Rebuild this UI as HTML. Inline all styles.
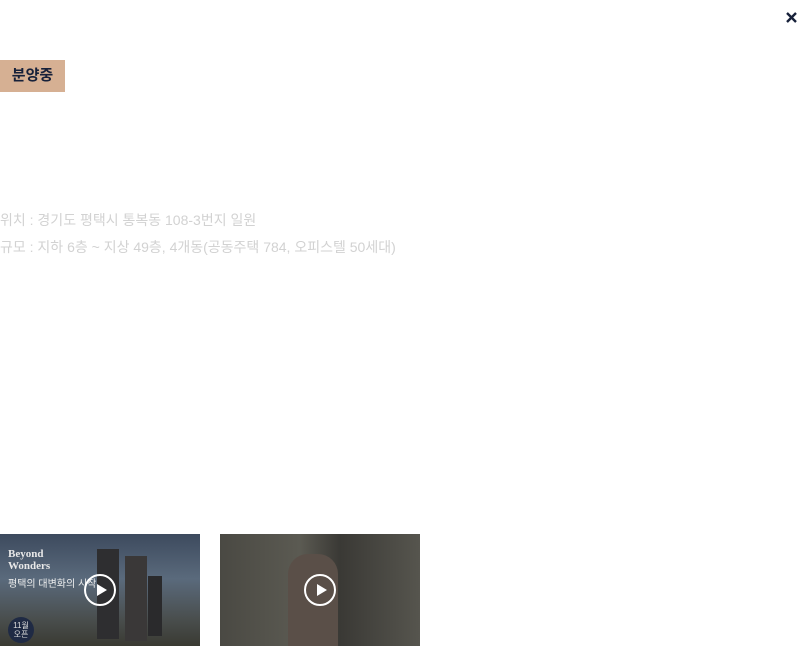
<!DOCTYPE html>
<html><head><meta charset="utf-8"><style>
body{margin:0;width:810px;height:647px;background:#fff;position:relative;overflow:hidden;font-family:"Liberation Sans","Noto Sans CJK KR",sans-serif}
.x{position:absolute;left:785px;top:11px}
.badge{position:absolute;left:0;top:60px;width:65px;height:32px;background:#d6b093;color:#17213a;font-weight:bold;font-size:15px;line-height:32px;text-align:center}
.t{position:absolute;left:0;font-size:14px;color:#d2d2d2;white-space:nowrap;letter-spacing:0}
.v{position:absolute;top:534px;width:200px;height:112px;overflow:hidden}
.play{position:absolute;left:84px;top:40px;width:28px;height:28px;border:2px solid #fff;border-radius:50%}
.play:after{content:"";position:absolute;left:11px;top:8px;border-left:10px solid #fff;border-top:6px solid transparent;border-bottom:6px solid transparent}
</style></head><body>
<svg class="x" width="13" height="13" viewBox="0 0 13 13"><path d="M2 2L11 11M11 2L2 11" stroke="#17213a" stroke-width="2.4"/></svg>
<div class="badge">분양중</div>
<div class="t" style="top:210px">위치 : 경기도 평택시 통복동 108-3번지 일원</div>
<div class="t" style="top:237px">규모 : 지하 6층 ~ 지상 49층, 4개동(공동주택 784, 오피스텔 50세대)</div>
<div class="v" style="left:0;background:linear-gradient(#3d4a5e 0%,#5a6a7c 40%,#4a4f4f 75%,#3a3a32 100%)">
 <div style="position:absolute;left:97px;top:15px;width:22px;height:90px;background:#2e2e30"></div>
 <div style="position:absolute;left:125px;top:22px;width:22px;height:85px;background:#3a3838"></div>
 <div style="position:absolute;left:148px;top:42px;width:14px;height:60px;background:#2a2a2c"></div>
 <div style="position:absolute;left:8px;top:14px;color:#e8e8e8;font-family:'Liberation Serif',serif;font-weight:bold;font-size:11px;line-height:12px">Beyond<br>Wonders</div>
 <div style="position:absolute;left:8px;top:41px;color:#eee;font-size:10px">평택의 대변화의 시작</div>
 <div style="position:absolute;left:8px;top:83px;width:26px;height:26px;border-radius:50%;background:#1f2a44;color:#ddd;font-size:8px;text-align:center;line-height:9px;padding-top:4px;box-sizing:border-box">11월<br>오픈</div>
 <div class="play"></div></div>
<div class="v" style="left:220px;background:linear-gradient(90deg,#4a4943 0%,#5b5a52 40%,#3a3935 60%,#56554e 100%)">
 <div style="position:absolute;left:68px;top:20px;width:50px;height:92px;background:#5a4f48;border-radius:20px 20px 0 0"></div>
 <div class="play"></div></div>
</body></html>
